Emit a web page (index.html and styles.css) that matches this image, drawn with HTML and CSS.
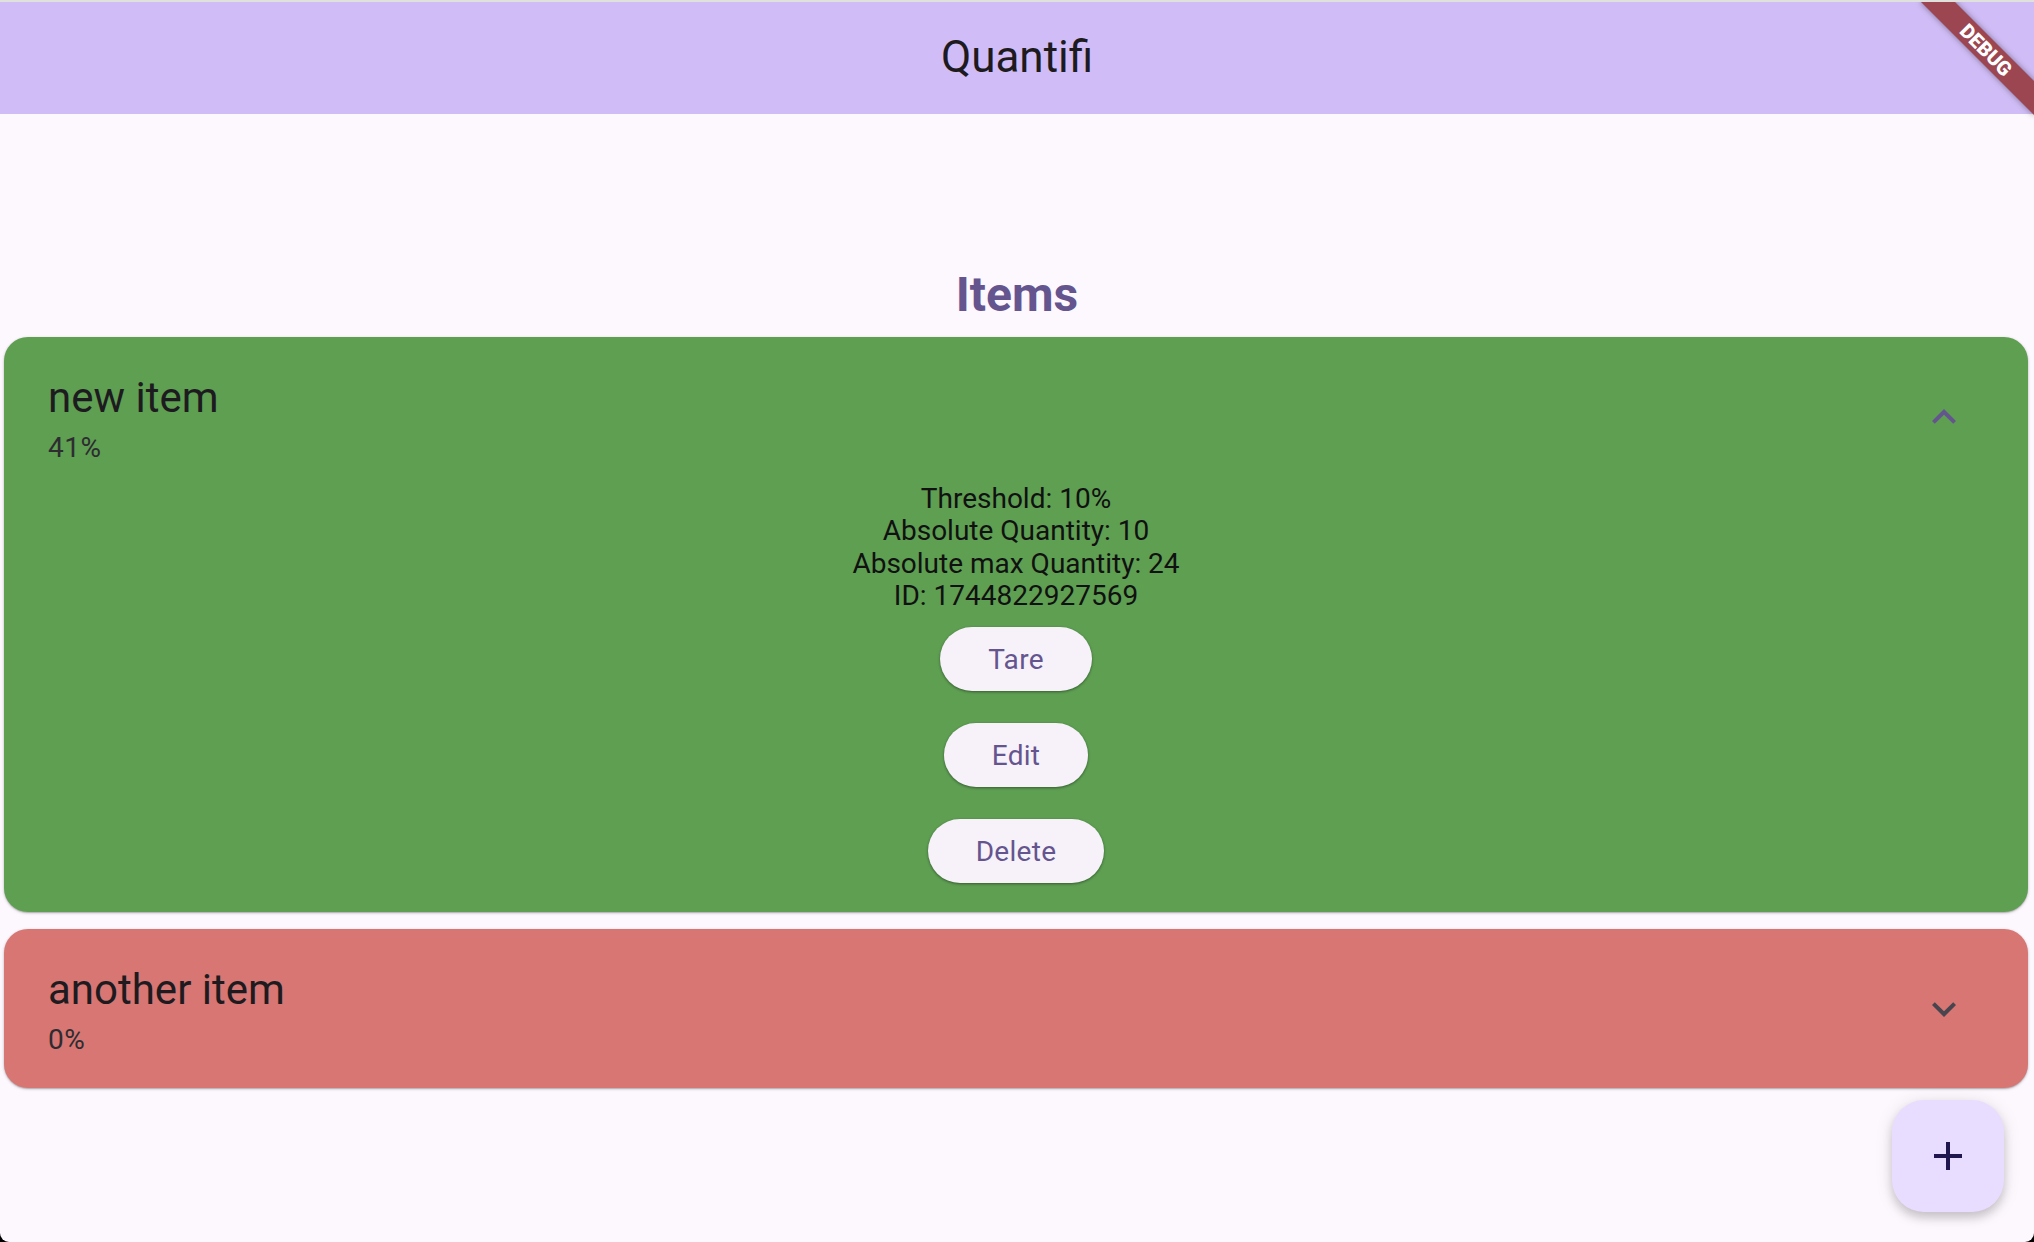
FILE: index.html
```html
<!DOCTYPE html>
<html lang="en">
<head>
<meta charset="utf-8">
<title>Quantifi</title>
<link rel="stylesheet" href="styles.css">
</head>
<body>
<div class="window">
  <header class="appbar">
    <h1 class="appbar-title">Quantifi</h1>
  </header>
  <div class="debug-banner"><span>DEBUG</span></div>

  <main class="content">
    <h2 class="section-title">Items</h2>

    <section class="card card--green card--expanded">
      <div class="tile">
        <div class="tile-text">
          <div class="tile-title">new item</div>
          <div class="tile-subtitle">41%</div>
        </div>
        <svg class="chevron chevron--open" viewBox="0 0 24 24" width="48" height="48" aria-hidden="true">
          <path d="M12 8l-6 6 1.41 1.41L12 10.83l4.59 4.58L18 14z"/>
        </svg>
      </div>
      <div class="details">
        <p>Threshold: 10%</p>
        <p>Absolute Quantity: 10</p>
        <p>Absolute max Quantity: 24</p>
        <p>ID: 1744822927569</p>
      </div>
      <div class="actions">
        <button class="pill">Tare</button>
        <button class="pill">Edit</button>
        <button class="pill">Delete</button>
      </div>
    </section>

    <section class="card card--red card--collapsed">
      <div class="tile">
        <div class="tile-text">
          <div class="tile-title">another item</div>
          <div class="tile-subtitle">0%</div>
        </div>
        <svg class="chevron" viewBox="0 0 24 24" width="48" height="48" aria-hidden="true">
          <path d="M16.59 8.59L12 13.17 7.41 8.59 6 10l6 6 6-6z"/>
        </svg>
      </div>
    </section>
  </main>

  <button class="fab" aria-label="Add">
    <svg viewBox="0 0 24 24" width="48" height="48" aria-hidden="true">
      <path d="M19 13h-6v6h-2v-6H5v-2h6V5h2v6h6v2z"/>
    </svg>
  </button>
</div>
</body>
</html>
```

FILE: styles.css
```css
* {
  box-sizing: border-box;
}

html, body {
  margin: 0;
  padding: 0;
  background: #000;
}

body {
  font-family: Roboto, "Noto Sans", sans-serif;
  color: #1d1b20;
}

.window {
  position: relative;
  width: 2034px;
  height: 1242px;
  overflow: hidden;
  background: #fdf7fe;
  border-top: 2px solid #e0e0dd;
  border-radius: 0 0 9px 9px;
}

.appbar {
  height: 112px;
  background: #d0bdf7;
  display: flex;
  align-items: center;
  justify-content: center;
  padding-bottom: 3px;
}

.appbar-title {
  margin: 0;
  font-size: 44px;
  font-weight: 400;
  line-height: 56px;
  color: #1d1b20;
}

.debug-banner {
  position: absolute;
  left: 1906px;
  top: 36px;
  width: 160px;
  height: 24px;
  transform: rotate(45deg);
  background: #9c4652;
  box-shadow: 0 0 6px rgba(0, 0, 0, 0.4);
  display: flex;
  align-items: center;
  justify-content: center;
}

.debug-banner span {
  color: #fff;
  font-size: 20px;
  font-weight: 900;
  line-height: 24px;
}

.content {
  padding-top: 149px;
  display: flex;
  flex-direction: column;
}

.section-title {
  margin: 0 0 10px;
  text-align: center;
  font-size: 48px;
  line-height: 64px;
  font-weight: 700;
  color: #65558f;
}

.card {
  margin: 0 6px 0 4px;
  border-radius: 24px;
  box-shadow: 0 1px 3px rgba(0, 0, 0, 0.25), 0 1px 1px rgba(0, 0, 0, 0.12);
}

.card + .card {
  margin-top: 17px;
}

.card--green {
  background: #5e9f52;
  padding-bottom: 29px;
}

.card--red {
  background: #d77673;
  padding-bottom: 14px;
}

.tile {
  display: flex;
  align-items: flex-start;
  padding: 33px 60px 14px 44px;
}

.tile-text {
  flex: 1;
}

.tile-title {
  font-size: 42px;
  line-height: 56px;
  color: #1d1b20;
}

.tile-subtitle {
  margin-top: 2px;
  font-size: 28px;
  line-height: 40px;
  letter-spacing: 0.5px;
  color: #2e2c31;
}

.chevron {
  margin-top: 23px;
  fill: #49454f;
  flex: none;
}

.chevron--open {
  fill: #65558f;
}

.details {
  margin-top: 1px;
  text-align: center;
  font-size: 28px;
  line-height: 32.4px;
  color: #111;
}

.details p {
  margin: 0;
}

.actions {
  margin-top: 14px;
  display: flex;
  flex-direction: column;
  align-items: center;
  gap: 32px;
}

.pill {
  height: 64px;
  padding: 2px 48px 0;
  border: none;
  border-radius: 32px;
  background: #f7f2fa;
  color: #65558f;
  font-family: Roboto, "Noto Sans", sans-serif;
  font-size: 28px;
  font-weight: 400;
  letter-spacing: 0.3px;
  box-shadow: 0 1px 3px rgba(0, 0, 0, 0.3), 0 1px 2px rgba(0, 0, 0, 0.15);
}

.fab {
  position: absolute;
  right: 30px;
  bottom: 30px;
  width: 112px;
  height: 112px;
  border: none;
  padding: 0;
  border-radius: 32px;
  background: #e9ddff;
  display: flex;
  align-items: center;
  justify-content: center;
  box-shadow: 0 6px 10px rgba(0, 0, 0, 0.16), 0 2px 18px rgba(0, 0, 0, 0.1);
}

.fab svg {
  fill: #21174f;
}
```
